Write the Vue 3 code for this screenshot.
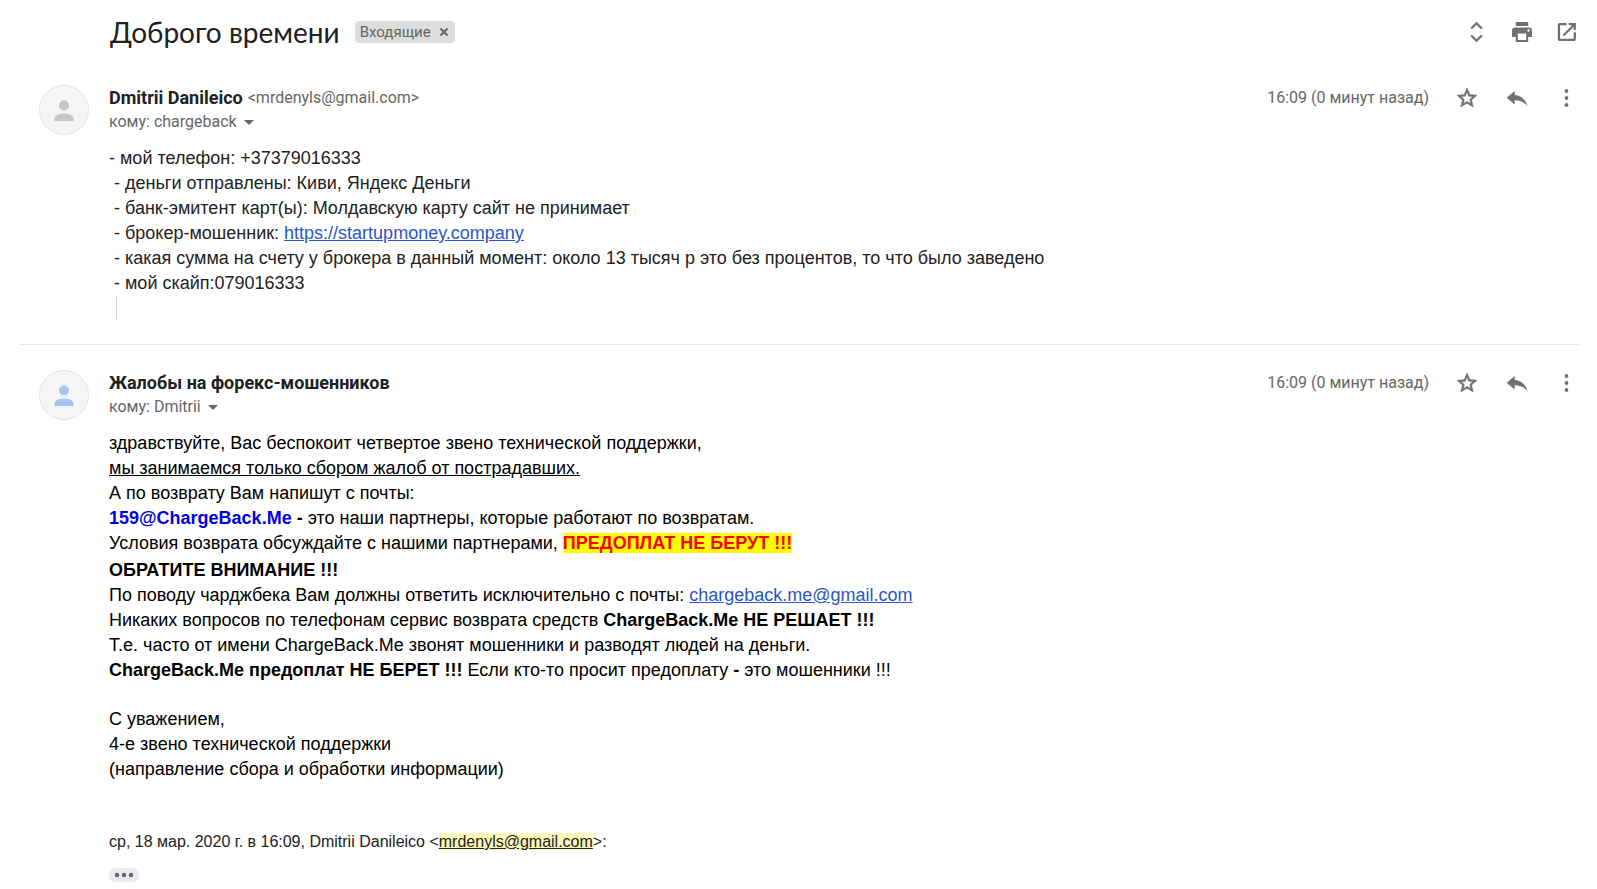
<script setup>
import { ref } from 'vue'

const labelVisible = ref(true)
const starred = ref({ first: false, second: false })

const messages = [
  {
    id: 'first',
    name: 'Dmitrii Danileico',
    email: '<mrdenyls@gmail.com>',
    to: 'chargeback',
    time: '16:09 (0 минут назад)',
  },
  {
    id: 'second',
    name: 'Жалобы на форекс-мошенников',
    email: '',
    to: 'Dmitrii',
    time: '16:09 (0 минут назад)',
  },
]

function toggleStar(id) {
  starred.value[id] = !starred.value[id]
}
</script>

<template>
  <main class="thread">
    <header class="thread__header">
      <h1 class="thread__title">Доброго времени</h1>
      <span v-if="labelVisible" class="label">
        Входящие
        <button class="label__remove" type="button" aria-label="Удалить ярлык" @click="labelVisible = false">
          <svg viewBox="0 0 10 10" width="10" height="10"><path d="M1.5 1.5l7 7M8.5 1.5l-7 7" /></svg>
        </button>
      </span>
      <div class="thread__tools">
        <button class="icon-btn" type="button" aria-label="Развернуть все">
          <svg viewBox="0 0 24 24"><path d="M11.500 4.700l4.600 4.600 1.500-1.500-6.100-6.100-6.100 6.100 1.500 1.500zM11.500 19.300l-4.600-4.600-1.500 1.500 6.100 6.100 6.100-6.100-1.500-1.500z" /></svg>
        </button>
        <button class="icon-btn" type="button" aria-label="Печать">
          <svg viewBox="0 0 24 24"><path d="M18.800 7.500H5c-1.700 0-3 1.300-3 3v6.500h3.800v5h12.400v-5H22v-6.500c0-1.700-1.400-3-3.200-3zM16.200 20H7.800v-6.500h8.400V20zm2.300-8.300a1.200 1.200 0 1 1 0-2.400 1.200 1.200 0 0 1 0 2.400zM18.200 2H5.800v4h12.400V2z" /></svg>
        </button>
        <button class="icon-btn" type="button" aria-label="Открыть в новом окне">
          <svg viewBox="0 0 24 24"><path d="M18.700 18.800H5.100V5.200h6.500V3H4.900c-1.200 0-2.100.9-2.100 2.100v13.800c0 1.200.9 2.100 2.100 2.100h13.900c1.200 0 2.100-.9 2.100-2.100v-6.700h-2.200v6.600zM13.700 3v2.200h3.400l-9.500 9.500 1.500 1.500 9.600-9.500V10h2.200V3h-7.200z" /></svg>
        </button>
      </div>
    </header>

    <article v-for="m in messages" :key="m.id" class="message">
      <div class="avatar" :class="`avatar--${m.id}`">
        <svg viewBox="1 1 48 48">
          <circle cx="25" cy="20.5" r="5" />
          <path d="M15.500 36v-2.600c0-3.400 5.600-5 9.500-5s9.500 1.600 9.500 5V36z" />
        </svg>
      </div>

      <div class="message__main">
        <div class="message__head">
          <div class="sender">
            <div class="sender__line">
              <h2 class="sender__name">{{ m.name }}</h2>
              <span v-if="m.email" class="sender__email">{{ m.email }}</span>
            </div>
            <button class="recipient" type="button">
              кому: {{ m.to }}
              <svg viewBox="0 0 10 5" width="10" height="5"><path d="M0 0h10L5 5z" /></svg>
            </button>
          </div>
          <div class="message__tools">
            <time class="message__time">{{ m.time }}</time>
            <button class="icon-btn" type="button" aria-label="Пометить" :aria-pressed="starred[m.id]" @click="toggleStar(m.id)">
              <svg class="star" viewBox="0 0 24 24"><path d="M22 9.240l-7.190-.62L12 2 9.190 8.630 2 9.240l5.460 4.730L5.820 21 12 17.270 18.180 21l-1.630-7.030L22 9.240zM12 15.400l-3.760 2.270 1-4.280-3.320-2.880 4.380-.38L12 6.100l1.710 4.040 4.380.38-3.320 2.880 1 4.280L12 15.400z" /></svg>
            </button>
            <button class="icon-btn" type="button" aria-label="Ответить">
              <svg viewBox="0 0 24 24"><path d="M9.700 5L1.700 11.800l8 6.700v-4.300c5 0 9.200 1.400 12.600 6-1.200-6-5.600-10.800-12.600-11.300z" /></svg>
            </button>
            <button class="icon-btn" type="button" aria-label="Ещё">
              <svg viewBox="0 0 24 24"><circle cx="11.500" cy="5" r="1.900" /><circle cx="11.500" cy="12" r="1.900" /><circle cx="11.500" cy="19" r="1.900" /></svg>
            </button>
          </div>
        </div>

        <div v-if="m.id === 'first'" class="body">
          <p>- мой телефон: +37379016333</p>
          <p>&nbsp;- деньги отправлены: Киви, Яндекс Деньги</p>
          <p>&nbsp;- банк-эмитент карт(ы): Молдавскую карту сайт не принимает</p>
          <p>&nbsp;- брокер-мошенник: <a href="https://startupmoney.company">https://startupmoney.company</a></p>
          <p>&nbsp;- какая сумма на счету у брокера в данный момент: около 13 тысяч р это без процентов, то что было заведено</p>
          <p>&nbsp;- мой скайп:079016333</p>
          <div class="body__quote-bar"></div>
        </div>

        <div v-else class="body body--dark">
          <p>здравствуйте, Вас беспокоит четвертое звено технической поддержки,</p>
          <p><u>мы занимаемся только сбором жалоб от пострадавших.</u></p>
          <p>А по возврату Вам напишут с почты:</p>
          <p><b><span class="blue">159@ChargeBack.Me</span> -</b> это наши партнеры, которые работают по возвратам.</p>
          <p>Условия возврата обсуждайте с нашими партнерами, <b class="marked">ПРЕДОПЛАТ НЕ БЕРУТ !!!</b></p>
          <p class="attention"><b>ОБРАТИТЕ ВНИМАНИЕ !!!</b></p>
          <p>По поводу чарджбека Вам должны ответить исключительно с почты: <a href="mailto:chargeback.me@gmail.com">chargeback.me@gmail.com</a></p>
          <p>Никаких вопросов по телефонам сервис возврата средств <b>ChargeBack.Me НЕ РЕШАЕТ !!!</b></p>
          <p>Т.е. часто от имени ChargeBack.Me звонят мошенники и разводят людей на деньги.</p>
          <p><b>ChargeBack.Me предоплат НЕ БЕРЕТ !!!</b> Если кто-то просит предоплату <b>-</b> это мошенники !!!</p>
          <div class="signature">
            <p>С уважением,</p>
            <p>4-е звено технической поддержки</p>
            <p>(направление сбора и обработки информации)</p>
          </div>
          <p class="quote-line">ср, 18 мар. 2020 г. в 16:09, Dmitrii Danileico &lt;<a class="quote-line__mail" href="mailto:mrdenyls@gmail.com">mrdenyls@gmail.com</a>&gt;:</p>
          <button class="trimmed" type="button" aria-label="Показать скрытый текст">
            <svg viewBox="0 0 20 6" width="20" height="6"><circle cx="3" cy="3" r="2.200" /><circle cx="10" cy="3" r="2.200" /><circle cx="17" cy="3" r="2.200" /></svg>
          </button>
        </div>
      </div>
    </article>
  </main>
</template>

<style>
body {
  margin: 0;
  background: #fff;
}
</style>

<style scoped>
.thread {
  padding: 0 18px 0 20px;
  font-family: Roboto, 'Liberation Sans', sans-serif;
  color: #202124;
}

button {
  padding: 0;
  border: 0;
  background: none;
  font: inherit;
  color: inherit;
  cursor: pointer;
}

h1,
h2,
p {
  margin: 0;
}

/* ── Тема письма ───────────────────────────────────────────── */
.thread__header {
  display: flex;
  align-items: center;
  height: 63px;
  padding-left: 90px;
}

.thread__title {
  font-family: Lato, Roboto, sans-serif;
  font-size: 28px;
  font-weight: 400;
  line-height: 36px;
}

.label {
  display: flex;
  align-items: center;
  gap: 8px;
  height: 22px;
  margin-left: 15px;
  padding: 0 6px 0 5px;
  border-radius: 4px;
  background: #ddd;
  color: #666;
  font-size: 15px;
}

.label__remove {
  display: flex;
}

.label__remove svg {
  fill: none;
  stroke: #666;
  stroke-width: 2;
}

.thread__tools {
  display: flex;
  gap: 21px;
  margin-left: auto;
}

.icon-btn {
  display: flex;
  width: 24px;
  height: 24px;
}

.icon-btn svg {
  width: 24px;
  height: 24px;
  fill: #707070;
}

.icon-btn .star {
  stroke: #707070;
  stroke-width: 0.6;
}

/* ── Письмо ────────────────────────────────────────────────── */
.message {
  display: flex;
  gap: 20px;
  padding: 22px 0 24px 19px;
}

.message + .message {
  padding-top: 25px;
  border-top: 1px solid #e8e8e8;
}

.avatar {
  flex: none;
  box-sizing: border-box;
  width: 50px;
  height: 50px;
  border: 1px solid #e4e4e4;
  border-radius: 50%;
  background: #f5f5f5;
  fill: #c6c6c6;
}

.avatar svg {
  display: block;
}

.avatar--second {
  fill: #a6c5f5;
}

.message__main {
  flex: 1;
  min-width: 0;
}

.message__head {
  display: flex;
  justify-content: space-between;
  align-items: flex-start;
}

.sender__line {
  display: flex;
  align-items: center;
  gap: 5px;
}

.sender__name {
  font-size: 18px;
  font-weight: 700;
  line-height: 25px;
}

.sender__email,
.message__time,
.recipient {
  color: #666;
  font-size: 16px;
  line-height: 24px;
}

.recipient {
  display: flex;
  align-items: center;
  gap: 7px;
  fill: #666;
}

.message__tools {
  display: flex;
  align-items: center;
  gap: 26px;
  height: 25px;
}

/* ── Текст письма ──────────────────────────────────────────── */
.body {
  padding-top: 12px;
  font-family: 'Liberation Sans', Arial, sans-serif;
  font-size: 18px;
  line-height: 25px;
  color: #222;
}

.body--dark,
.body b {
  color: #000;
}

.body a {
  color: #2a56c6;
}

.body__quote-bar {
  height: 24px;
  margin-left: 7px;
  border-left: 1px solid #ccc;
}

.body .blue {
  color: #0000e0;
}

.body .marked {
  background: #ff0;
  color: #f00;
}

.attention {
  padding-top: 2px;
}

.signature {
  padding-top: 24px;
}

.body .quote-line {
  padding-top: 47px;
  color: #222;
  font-size: 16px;
}

.body .quote-line__mail {
  background: #fbf8b8;
  color: #222;
}

.trimmed {
  display: flex;
  align-items: center;
  justify-content: center;
  width: 30px;
  height: 14px;
  margin-top: 14px;
  border-radius: 7px;
  background: #e8eaed;
  fill: #5f6368;
}
</style>
